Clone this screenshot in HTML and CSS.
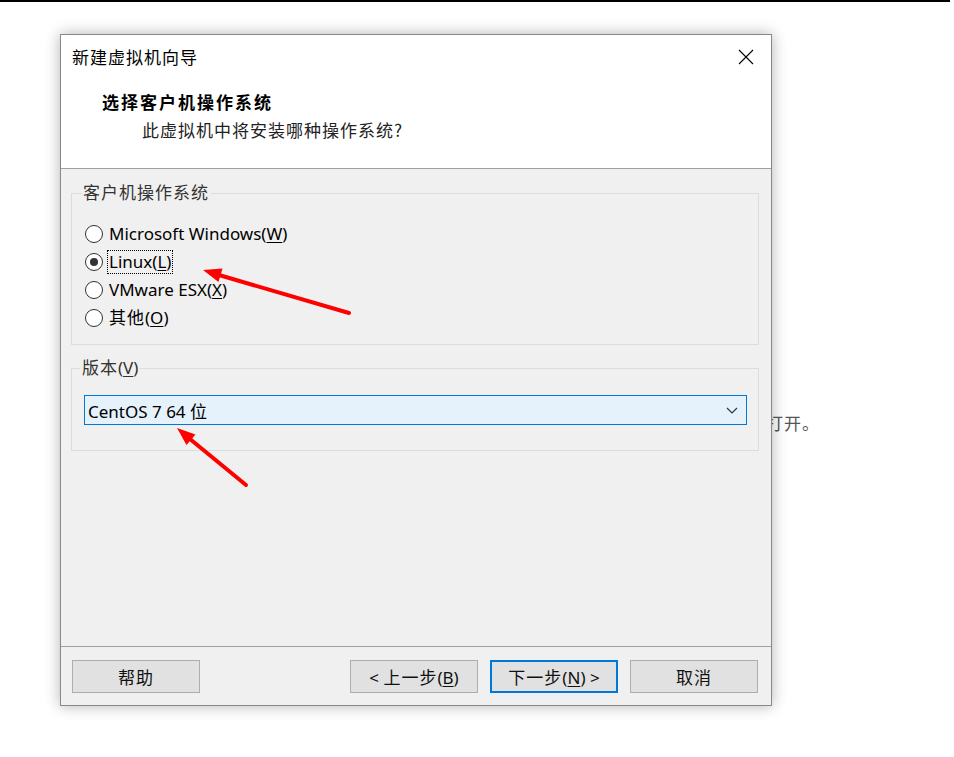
FILE: index.html
```html
<!DOCTYPE html>
<html lang="zh-CN">
  <head>
    <meta charset="UTF-8" />
    <title>新建虚拟机向导</title>
    <link rel="stylesheet" href="styles.css">
  </head>

  <body>
    <div class="topline"></div>

    <div class="stage">
      <p class="behind">打开。</p>

      <div class="dialog">
        <div class="header">
          <div class="titlebar">
            <span class="title">新建虚拟机向导</span>
            <svg class="close" width="16" height="16" viewBox="0 0 16 16">
              <path d="M1 1 L15 15 M15 1 L1 15" stroke="#000" stroke-width="1.1" fill="none" />
            </svg>
          </div>
          <div class="heading">选择客户机操作系统</div>
          <div class="subtitle">此虚拟机中将安装哪种操作系统?</div>
        </div>
        <!--Header end-->

        <div class="body">
          <fieldset class="group os">
            <legend>客户机操作系统</legend>
            <label class="radio">
              <span class="dot"></span>
              <span class="text">Microsoft Windows(<u>W</u>)</span>
            </label>
            <label class="radio checked">
              <span class="dot"></span>
              <span class="text focus">Linux(<u>L</u>)</span>
            </label>
            <label class="radio">
              <span class="dot"></span>
              <span class="text">VMware ESX(<u>X</u>)</span>
            </label>
            <label class="radio">
              <span class="dot"></span>
              <span class="text"><span class="cjk">其他</span>(<u>O</u>)</span>
            </label>
          </fieldset>

          <fieldset class="group version">
            <legend><span class="cjk">版本</span>(<u>V</u>)</legend>
            <div class="select">
              <span>CentOS 7 64 位</span>
              <svg width="12" height="7" viewBox="0 0 12 7">
                <path d="M1 1 L6 6 L11 1" stroke="#333" stroke-width="1.2" fill="none" />
              </svg>
            </div>
          </fieldset>
        </div>
        <!--Body end-->

        <div class="footer">
          <button type="button" class="btn"><span class="cjk">帮助</span></button>
          <button type="button" class="btn back">&lt; <span class="cjk">上一步</span>(<u>B</u>)</button>
          <button type="button" class="btn primary"><span class="cjk">下一步</span>(<u>N</u>) &gt;</button>
          <button type="button" class="btn"><span class="cjk">取消</span></button>
        </div>
        <!--Footer end-->
      </div>

      <svg class="arrows" width="954" height="757" viewBox="0 0 954 757">
        <line x1="349" y1="313" x2="219" y2="275" stroke="#f00" stroke-width="4" stroke-linecap="round" />
        <polygon points="203,270 222.5,268.5 218.5,282" fill="#f00" />
        <line x1="246" y1="485" x2="190" y2="439" stroke="#f00" stroke-width="4" stroke-linecap="round" />
        <polygon points="177,428 195.5,434.5 186.5,445" fill="#f00" />
      </svg>
    </div>
  </body>
</html>
```

FILE: styles.css
```css
html,
body {
  margin: 0;
  padding: 0;
  background: #fff;
  font-family: "Noto Sans", "Noto Sans CJK SC", sans-serif;
  font-size: 17px;
  color: #000;
}

.topline {
  width: 950px;
  height: 2px;
  background: #000;
}

.stage {
  position: relative;
  height: 755px;
  padding: 32px 0 0 60px;
  box-sizing: border-box;
}

.behind {
  position: absolute;
  left: 766px;
  top: 410px;
  margin: 0;
  color: #555;
  line-height: 24px;
  letter-spacing: 1px;
}

.dialog {
  position: relative;
  width: 712px;
  height: 672px;
  box-sizing: border-box;
  border: 1px solid #888;
  background: #f0f0f0;
  box-shadow: 0 0 14px rgba(0, 0, 0, 0.3);
  display: flex;
  flex-direction: column;
}

.header {
  height: 134px;
  box-sizing: border-box;
  background: #fff;
  border-bottom: 1px solid #a0a0a0;
  padding-top: 10px;
}

.titlebar {
  display: flex;
  align-items: center;
  justify-content: space-between;
  padding: 0 17px 0 11px;
  height: 24px;
  line-height: 24px;
}

.title {
  font-family: "Noto Sans CJK SC", sans-serif;
  letter-spacing: 1px;
}

.heading {
  margin-top: 21px;
  padding-left: 41px;
  line-height: 24px;
  letter-spacing: 2px;
  font-weight: bold;
  font-family: "Noto Sans CJK SC", sans-serif;
}

.subtitle {
  margin-top: 4px;
  padding-left: 81px;
  line-height: 24px;
  letter-spacing: 1px;
  color: #222;
  font-family: "Noto Sans CJK SC", sans-serif;
}

.cjk {
  letter-spacing: 1px;
}

.body {
  flex: 1;
  padding: 14px 0 0 10px;
}

.group {
  width: 688px;
  box-sizing: border-box;
  margin: 0;
  border: 1px solid #dcdcdc;
}

.group legend {
  margin-left: -4px;
  padding: 0 2px;
  line-height: 20px;
  color: #333;
}

.os legend {
  letter-spacing: 1px;
}

.os {
  padding: 17px 0 12px 13px;
}

.version {
  margin-top: 13px;
  padding: 17px 11px 25px 12px;
}

.radio {
  display: flex;
  align-items: center;
  height: 28px;
}

.dot {
  width: 18px;
  height: 18px;
  box-sizing: border-box;
  border: 1px solid #333;
  border-radius: 50%;
  background: #fff;
  margin-right: 5px;
  display: flex;
  align-items: center;
  justify-content: center;
}

.checked .dot::after {
  content: "";
  width: 8px;
  height: 8px;
  border-radius: 50%;
  background: #333;
}

.text {
  line-height: 22px;
  padding: 0 1px;
}

.focus {
  outline: 1px dotted #000;
}

u {
  text-decoration-thickness: 1px;
  text-underline-offset: 2px;
}

.select {
  height: 30px;
  box-sizing: border-box;
  border: 1px solid #0078d7;
  background: #e5f1fb;
  display: flex;
  align-items: center;
  justify-content: space-between;
  padding: 0 8px 0 3px;
}

.footer {
  height: 59px;
  box-sizing: border-box;
  border-top: 1px solid #a0a0a0;
  padding: 13px 13px 0 11px;
  display: flex;
  align-items: flex-start;
  gap: 12px;
}

.btn {
  width: 128px;
  height: 33px;
  box-sizing: border-box;
  border: 1px solid #adadad;
  background: #e1e1e1;
  font: inherit;
  color: #111;
  padding: 0;
  font-family: "Noto Sans", "Noto Sans CJK SC", sans-serif;
}

.back {
  margin-left: auto;
}

.primary {
  border: 2px solid #0078d7;
}

.arrows {
  position: absolute;
  left: 0;
  top: -2px;
  pointer-events: none;
}
```
